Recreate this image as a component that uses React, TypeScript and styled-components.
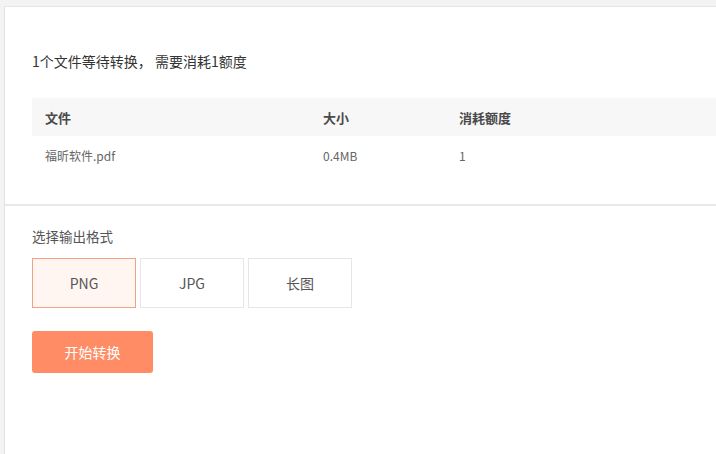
import { useState } from 'react';
import styled, { createGlobalStyle } from 'styled-components';

const GlobalStyle = createGlobalStyle`
  html, body {
    margin: 0;
    padding: 0;
    background: #f3f3f3;
    font-family: "Noto Sans CJK SC", "Noto Sans", sans-serif;
    overflow: hidden;
  }
`;

const formats = ['PNG', 'JPG', '长图'];

const files = [{ name: '福昕软件.pdf', size: '0.4MB', cost: '1' }];

function App() {
  const [format, setFormat] = useState('PNG');

  return (
    <Page>
      <GlobalStyle />
      <Panel>
        <Summary>
          <Title>1个文件等待转换， 需要消耗1额度</Title>
          <Table>
            <HeadRow>
              <Cell $w={278}>文件</Cell>
              <Cell $w={136}>大小</Cell>
              <Cell>消耗额度</Cell>
            </HeadRow>
            {files.map((f) => (
              <BodyRow key={f.name}>
                <Cell $w={278}>{f.name}</Cell>
                <Cell $w={136}>{f.size}</Cell>
                <Cell>{f.cost}</Cell>
              </BodyRow>
            ))}
          </Table>
        </Summary>
        <Options>
          <Label>选择输出格式</Label>
          <FormatList>
            {formats.map((f) => (
              <FormatButton
                key={f}
                $active={format === f}
                onClick={() => setFormat(f)}
              >
                {f}
              </FormatButton>
            ))}
          </FormatList>
          <StartButton>开始转换</StartButton>
        </Options>
      </Panel>
    </Page>
  );
}

const Page = styled.div`
  padding: 6px 0 0 4px;
  min-height: 460px;
`;

const Panel = styled.div`
  background: #fff;
  border-top: 1px solid #e6e6e6;
  border-left: 1px solid #e2e2e2;
  min-height: 460px;
`;

const Summary = styled.div`
  padding: 44px 0 30px 27px;
  border-bottom: 2px solid #e8e8e8;
`;

const Title = styled.div`
  font-size: 14px;
  line-height: 20px;
  color: #333;
  margin-bottom: 27px;
`;

const Table = styled.div`
  display: flex;
  flex-direction: column;
`;

const HeadRow = styled.div`
  display: flex;
  align-items: center;
  height: 38px;
  background: #f7f7f7;
  font-size: 13px;
  font-weight: bold;
  color: #4a4a4a;
`;

const BodyRow = styled.div`
  display: flex;
  align-items: center;
  height: 38px;
  font-size: 12px;
  color: #666;
`;

const Cell = styled.div<{ $w?: number }>`
  box-sizing: border-box;
  padding-left: 13px;
  ${(p) => (p.$w ? `width: ${p.$w}px;` : 'flex: 1;')}
`;

const Options = styled.div`
  padding: 20px 0 0 27px;
`;

const Label = styled.div`
  font-size: 13.5px;
  line-height: 20px;
  color: #555;
  margin-bottom: 12px;
`;

const FormatList = styled.div`
  display: flex;
  gap: 4px;
  margin-bottom: 23px;
`;

const FormatButton = styled.button<{ $active?: boolean }>`
  box-sizing: border-box;
  width: 104px;
  height: 50px;
  font-family: inherit;
  font-size: 14px;
  color: #555;
  cursor: pointer;
  border: 1px solid ${(p) => (p.$active ? '#f0a283' : '#e6e6e6')};
  background: ${(p) => (p.$active ? '#fff6f2' : '#fff')};
  padding: 0;
`;

const StartButton = styled.button`
  width: 121px;
  height: 42px;
  border: none;
  border-radius: 3px;
  background: #ff8c64;
  color: #fff;
  font-family: inherit;
  font-size: 14px;
  cursor: pointer;
`;

export default App;
